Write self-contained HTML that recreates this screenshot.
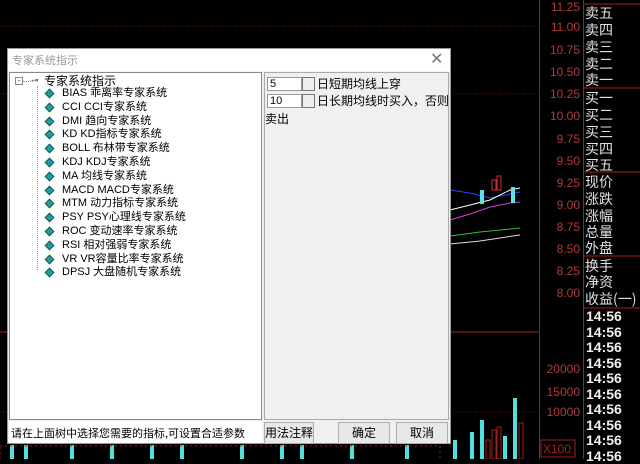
<!DOCTYPE html>
<html><head><meta charset="utf-8"><style>
*{margin:0;padding:0;box-sizing:border-box}
body{width:640px;height:459px;background:#000;position:relative;overflow:hidden;font-family:"Liberation Sans","Noto Sans CJK SC",sans-serif}
.a{position:absolute;white-space:nowrap}
.pl{color:#b03a3a;font-size:12px;right:60px;text-align:right;position:absolute;line-height:14px}
.cn{color:#e0e0e0;font-size:14px;left:585px;position:absolute;line-height:17px;white-space:nowrap;font-family:"Noto Sans CJK SC",sans-serif}
.tm{color:#f0f0f0;font-size:14px;font-weight:bold;left:586px;position:absolute;line-height:15px}
.tr{font-size:11px;line-height:13.8px;color:#000;font-family:"Liberation Sans","Noto Sans CJK SC",sans-serif;position:absolute;left:62px;white-space:nowrap}
.dm{position:absolute;left:46px;width:7px;height:7px;background:#2a9a9a;transform:rotate(45deg);border:1px solid #0d5c5c}
.btn{position:absolute;background:#e8e8e8;border:1px solid #adadad;font-size:12px;text-align:center;line-height:20px;color:#000;font-family:"Noto Sans CJK SC",sans-serif}
</style></head><body>
<svg class="a" style="left:0;top:0" width="640" height="459">
<g stroke="#7a1010" stroke-width="1">
<line x1="0" y1="26" x2="539" y2="26" stroke-dasharray="1 2"/>
<line x1="0" y1="94" x2="539" y2="94" stroke-dasharray="1 2"/>
<line x1="0" y1="332" x2="539" y2="332" stroke="#a02020"/>
<line x1="0" y1="412" x2="539" y2="412" stroke-dasharray="1 2"/>
</g>
<line x1="539.5" y1="0" x2="539.5" y2="459" stroke="#a02020"/>
<line x1="583.5" y1="0" x2="583.5" y2="459" stroke="#a02020"/>
<g stroke="#a02020"><line x1="583" y1="4" x2="640" y2="4"/><line x1="583" y1="88" x2="640" y2="88"/><line x1="583" y1="172" x2="640" y2="172"/><line x1="583" y1="256" x2="640" y2="256"/><line x1="583" y1="308" x2="640" y2="308"/></g>
<rect x="541" y="440" width="34" height="17" fill="none" stroke="#a02020"/>
<polyline points="450,190 470,193 490,198 510,194 520,192" stroke="#3040ff" fill="none"/>
<polyline points="450,210 470,205 490,200 510,190 520,188" stroke="#fff" fill="none"/>
<polyline points="450,220 470,214 490,207 510,203 520,202" stroke="#d040d0" fill="none"/>
<polyline points="450,236 480,232 520,228" stroke="#30c030" fill="none"/>
<polyline points="450,244 480,241 520,235" stroke="#ddd" fill="none"/>
<rect x="480" y="190" width="4" height="14" fill="#60e0e0"/><rect x="511" y="187" width="4" height="16" fill="#60e0e0"/>
<rect x="492" y="180" width="4" height="10" fill="none" stroke="#d03030"/><rect x="497" y="176" width="4" height="14" fill="none" stroke="#d03030"/>
<g fill="#50e0e0"><rect x="10" y="445" width="4" height="14"/><rect x="24" y="445" width="4" height="14"/><rect x="70" y="445" width="4" height="14"/><rect x="110" y="445" width="4" height="14"/><rect x="150" y="445" width="4" height="14"/><rect x="180" y="445" width="4" height="14"/><rect x="240" y="445" width="4" height="14"/><rect x="280" y="445" width="4" height="14"/><rect x="300" y="445" width="4" height="14"/><rect x="350" y="445" width="4" height="14"/><rect x="405" y="445" width="4" height="14"/><rect x="470" y="432" width="4" height="27"/><rect x="480" y="420" width="4" height="39"/><rect x="503" y="436" width="4" height="23"/><rect x="513" y="398" width="4" height="61"/><rect x="453" y="440" width="4" height="19"/></g>
<g fill="none" stroke="#a02020"><rect x="0" y="446" width="440" height="14" stroke-dasharray="2 3"/><rect x="492" y="430" width="4" height="29"/><rect x="497" y="427" width="4" height="32"/><rect x="519" y="423" width="4" height="36"/><rect x="486" y="440" width="4" height="19"/></g>
</svg>
<div class="pl" style="top:0px">11.25</div>
<div class="pl" style="top:20px">11.00</div><div class="pl" style="top:43px">10.75</div><div class="pl" style="top:65px">10.50</div><div class="pl" style="top:87px">10.25</div><div class="pl" style="top:109px">10.00</div><div class="pl" style="top:132px">9.75</div><div class="pl" style="top:154px">9.50</div><div class="pl" style="top:176px">9.25</div><div class="pl" style="top:198px">9.00</div><div class="pl" style="top:220px">8.75</div><div class="pl" style="top:242px">8.50</div><div class="pl" style="top:264px">8.25</div><div class="pl" style="top:286px">8.00</div>
<div class="pl" style="top:362px">20000</div><div class="pl" style="top:385px">15000</div><div class="pl" style="top:405px">10000</div>
<div class="a" style="left:543px;top:442px;color:#a02020;font-size:12px">X100</div>
<div class="cn" style="top:5px">卖五</div><div class="cn" style="top:22px">卖四</div><div class="cn" style="top:39px">卖三</div><div class="cn" style="top:56px">卖二</div><div class="cn" style="top:72px">卖一</div>
<div class="cn" style="top:90px">买一</div><div class="cn" style="top:107px">买二</div><div class="cn" style="top:124px">买三</div><div class="cn" style="top:141px">买四</div><div class="cn" style="top:157px">买五</div>
<div class="cn" style="top:174px">现价</div><div class="cn" style="top:191px">涨跌</div><div class="cn" style="top:208px">涨幅</div><div class="cn" style="top:224px">总量</div><div class="cn" style="top:240px">外盘</div>
<div class="cn" style="top:258px">换手</div><div class="cn" style="top:274px">净资</div><div class="cn" style="top:291px">收益(一)</div>
<div class="tm" style="top:309px">14:56</div><div class="tm" style="top:325px">14:56</div><div class="tm" style="top:340px">14:56</div><div class="tm" style="top:356px">14:56</div><div class="tm" style="top:371px">14:56</div><div class="tm" style="top:387px">14:56</div><div class="tm" style="top:402px">14:56</div><div class="tm" style="top:418px">14:56</div><div class="tm" style="top:433px">14:56</div><div class="tm" style="top:449px">14:56</div>

<div class="a" style="left:7px;top:48px;width:444px;height:396px;background:#f0f0f0;border:1px solid #999"></div>
<div class="a" style="left:8px;top:49px;width:442px;height:22px;background:#fff"></div>
<div class="a" style="left:12px;top:52px;font-size:11px;color:#999;font-family:'Noto Sans CJK SC',sans-serif">专家系统指示</div>
<div class="a" style="left:430px;top:49px;font-size:16px;color:#777">✕</div>
<div class="a" style="left:9px;top:72px;width:253px;height:348px;background:#fff;border:1px solid #888"></div>
<div class="a" style="left:264px;top:72px;width:185px;height:348px;background:#f0f0f0;border:1px solid #aaa"></div>
<div class="a" style="left:9px;top:421px;width:253px;height:22px;background:#fff"></div>
<div class="a" style="left:11px;top:425px;font-size:11px;color:#000;font-family:'Noto Sans CJK SC',sans-serif">请在上面树中选择您需要的指标,可设置合适参数</div>
<div class="btn" style="left:264px;top:422px;width:50px">用法注释</div>
<div class="btn" style="left:338px;top:422px;width:52px">确定</div>
<div class="btn" style="left:396px;top:422px;width:52px">取消</div>
<!-- tree -->
<div class="a" style="left:15px;top:77px;width:8px;height:8px;border:1px solid #888;font-size:8px;line-height:6px;text-align:center;color:#333">-</div>
<div class="a" style="left:23px;top:81px;width:10px;border-top:1px dotted #999"></div>
<div class="a" style="left:31px;top:75px;font-size:9px;color:#333">⊸</div>
<div class="a" style="left:44px;top:72px;font-size:12px;font-family:'Noto Sans CJK SC',sans-serif;color:#000">专家系统指示</div>
<div class="a" style="left:37px;top:86px;height:184px;border-left:1px dotted #999"></div>
<div class="tr" style="top:87px">BIAS 乖离率专家系统</div>
<div class="tr" style="top:101px">CCI CCI专家系统</div>
<div class="tr" style="top:115px">DMI 趋向专家系统</div>
<div class="tr" style="top:128px">KD KD指标专家系统</div>
<div class="tr" style="top:142px">BOLL 布林带专家系统</div>
<div class="tr" style="top:156px">KDJ KDJ专家系统</div>
<div class="tr" style="top:170px">MA 均线专家系统</div>
<div class="tr" style="top:184px">MACD MACD专家系统</div>
<div class="tr" style="top:197px">MTM 动力指标专家系统</div>
<div class="tr" style="top:211px">PSY PSY心理线专家系统</div>
<div class="tr" style="top:225px">ROC 变动速率专家系统</div>
<div class="tr" style="top:239px">RSI 相对强弱专家系统</div>
<div class="tr" style="top:253px">VR VR容量比率专家系统</div>
<div class="tr" style="top:266px">DPSJ 大盘随机专家系统</div>
<div class="dm" style="top:90px"></div><div class="dm" style="top:104px"></div><div class="dm" style="top:118px"></div><div class="dm" style="top:131px"></div><div class="dm" style="top:145px"></div><div class="dm" style="top:159px"></div><div class="dm" style="top:173px"></div><div class="dm" style="top:187px"></div><div class="dm" style="top:200px"></div><div class="dm" style="top:214px"></div><div class="dm" style="top:228px"></div><div class="dm" style="top:242px"></div><div class="dm" style="top:256px"></div><div class="dm" style="top:269px"></div>
<!-- params -->
<div class="a" style="left:267px;top:77px;width:35px;height:14px;background:#fff;border:1px solid #999;font-size:11px;line-height:12px;padding-left:2px">5</div>
<div class="a" style="left:302px;top:77px;width:13px;height:14px;border:1px solid #777;background:#eee"></div>
<div class="a" style="left:317px;top:75px;font-size:12px;font-family:'Noto Sans CJK SC',sans-serif">日短期均线上穿</div>
<div class="a" style="left:267px;top:94px;width:35px;height:14px;background:#fff;border:1px solid #999;font-size:11px;line-height:12px;padding-left:2px">10</div>
<div class="a" style="left:302px;top:94px;width:13px;height:14px;border:1px solid #777;background:#eee"></div>
<div class="a" style="left:317px;top:92px;font-size:12px;font-family:'Noto Sans CJK SC',sans-serif">日长期均线时买入，否则</div>
<div class="a" style="left:265px;top:110px;font-size:12px;font-family:'Noto Sans CJK SC',sans-serif">卖出</div>
</body></html>
